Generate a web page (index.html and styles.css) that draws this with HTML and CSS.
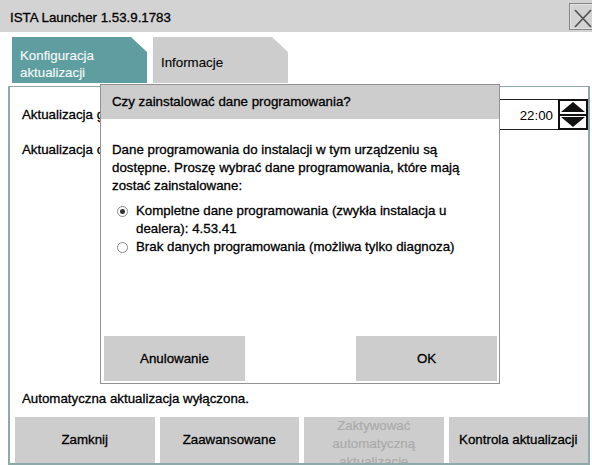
FILE: index.html
```html
<!DOCTYPE html>
<html>
<head>
  <meta charset='utf-8'>
  <title>ISTA Launcher</title>
  <meta name='viewport' content='width=device-width, initial-scale=1'>
  <link rel="stylesheet" href="styles.css">
</head>
<body>

  <div class="window">
    <div class="titlebar">
      <span class="title">ISTA Launcher 1.53.9.1783</span>
      <button class="close" type="button">
        <svg width="20" height="22" viewBox="0 0 20 22">
          <path d="M3 4 L19 21 M19 4 L3 21" stroke="#555" stroke-width="1.8" fill="none"/>
        </svg>
      </button>
    </div>

    <div class="tabs">
      <div class="tab active">Konfiguracja<br>aktualizacji</div>
      <div class="tab">Informacje</div>
    </div>

    <div class="panel">
      <div class="row">
        <span class="label">Aktualizacja godzina</span>
        <div class="spinner">
          <div class="spin-field">22:00</div>
          <div class="spin-buttons">
            <span class="spin-up">
              <svg width="24" height="10" viewBox="0 0 24 10"><path d="M12 0 L24 10 L0 10 Z" fill="#111"/></svg>
            </span>
            <span class="spin-down">
              <svg width="24" height="10" viewBox="0 0 24 10"><path d="M0 0 L24 0 L12 10 Z" fill="#111"/></svg>
            </span>
          </div>
        </div>
      </div>
      <div class="row-second">
        <span class="label">Aktualizacja codziennie</span>
      </div>

      <div class="status">Automatyczna aktualizacja wyłączona.</div>
      <div class="actions">
        <button class="btn" type="button">Zamknij</button>
        <button class="btn" type="button">Zaawansowane</button>
        <button class="btn" type="button" disabled>Zaktywować<br>automatyczną<br>aktualizację</button>
        <button class="btn" type="button">Kontrola aktualizacji</button>
      </div>
    </div>

    <!-- okno dialogowe nad panelem -->
    <div class="dialog">
      <div class="dialog-head">Czy zainstalować dane programowania?</div>
      <div class="dialog-body">
        <p class="dialog-text">Dane programowania do instalacji w tym urządzeniu są dostępne. Proszę wybrać dane programowania, które mają zostać zainstalowane:</p>
        <div class="option">
          <span class="radio checked"></span>
          <span>Kompletne dane programowania (zwykła instalacja u dealera): 4.53.41</span>
        </div>
        <div class="option">
          <span class="radio"></span>
          <span>Brak danych programowania (możliwa tylko diagnoza)</span>
        </div>
      </div>
      <div class="dialog-actions">
        <button class="btn" type="button">Anulowanie</button>
        <button class="btn" type="button">OK</button>
      </div>
    </div>
  </div>

</body>
</html>
```

FILE: styles.css
```css
body {
  margin: 0;
  background: #fff;
  font-family: "Liberation Sans", Arial, sans-serif;
  font-size: 13.3px;
  color: #000;
  -webkit-text-stroke: 0.3px #000; /* tekst jak w oryginale, ciemniejszy */
}
.window {
  position: relative;
  width: 592px;
  height: 465px;
  overflow: hidden;
}

/* ======== pasek tytułu ======== */
.titlebar {
  display: flex;
  align-items: flex-start;
  height: 32px;
  padding-left: 10px;
  background: #d3d3d3;
  overflow: hidden;
}
.title {
  margin-top: 9px;
  line-height: 17px;
}
.close {
  margin-left: auto;
  margin-top: 3px;
  margin-right: -4px;
  width: 27px;
  height: 27px;
  padding: 0 0 0 2px;
  background: #d3d3d3;
  border: 1px solid #858585;
  box-shadow: inset 0 0 0 1px #e2e2e2;
  display: flex;
  align-items: center;
}

/* ======== zakładki ======== */
.tabs {
  display: flex;
  gap: 6px;
  height: 54px;
  padding: 5px 0 0 12px;
  box-sizing: border-box;
}
.tab {
  width: 135px;
  height: 46px;
  padding: 17px 8px 0;
  box-sizing: border-box;
  line-height: 17px;
  background: #cdcdcd;
  clip-path: polygon(0 0, calc(100% - 16px) 0, 100% 15px, 100% 100%, 0 100%);
  -webkit-text-stroke: 0.15px #222;
}
.tab.active {
  padding-top: 10px;
  background: #5f9ea0;
  color: #f4f8f8;
  -webkit-text-stroke: 0.15px #f4f8f8;
}

/* ======== panel ======== */
.panel {
  display: flex;
  flex-direction: column;
  margin-left: 8px;
  width: 582px;
  height: 379px;
  box-sizing: border-box;
  border: 2px solid #8fa8a8;
  border-top-width: 1px;
}
.row {
  display: flex;
  align-items: center;
  justify-content: space-between;
  height: 31px;
  margin-top: 12px;
  padding-left: 12px;
}
.row-second {
  margin-top: 11px;
  padding-left: 12px;
  line-height: 17px;
}
.spinner {
  display: flex;
  height: 31px;
}
.spin-field {
  width: 78px;
  padding-right: 5px;
  box-sizing: border-box;
  border: 1px solid #222;
  border-right: none;
  text-align: right;
  line-height: 31px;
  background: #fff;
  -webkit-text-stroke: 0;
}
.spin-buttons {
  display: flex;
  flex-direction: column;
  width: 30px;
  box-sizing: border-box;
  border: 2px solid #111;
}
.spin-buttons span {
  flex: 1;
  display: flex;
  align-items: center;
  justify-content: center;
}
.spin-up {
  border-bottom: 2px solid #111;
}
.status {
  margin-top: auto;
  margin-bottom: 10px;
  padding-left: 12px;
  line-height: 17px;
}
.actions {
  display: flex;
  gap: 5px;
  padding-left: 5px;
}
.btn {
  height: 46px;
  padding: 0 4px;
  border: none;
  background: #cdcdcd;
  font-family: inherit;
  font-size: 13.3px;
  color: #000;
  line-height: 18px;
  overflow: hidden;
}
.actions .btn {
  flex: 1;
}
.btn:disabled {
  color: #ababab;
  -webkit-text-stroke: 0.2px #ababab;
}

/* ======== dialog ======== */
.dialog {
  position: absolute;
  left: 100px;
  top: 84px;
  width: 400px;
  height: 300px;
  box-sizing: border-box;
  display: flex;
  flex-direction: column;
  background: #fff;
  border: 1px solid #929292;
}
.dialog-head {
  height: 34px;
  padding-left: 11px;
  line-height: 34px;
  background: #cdcdcd;
}
.dialog-body {
  padding: 0 12px 0 11px;
  line-height: 18px;
}
.dialog-text {
  margin: 22px 0 7px;
}
.option {
  display: flex;
  align-items: flex-start;
  gap: 8px;
  padding-left: 5px;
}
.radio {
  flex: none;
  position: relative;
  width: 11px;
  height: 11px;
  margin-top: 4px;
  box-sizing: border-box;
  border: 1px solid #8a8a8a;
  border-radius: 50%;
  background: #fff;
}
.radio.checked::after {
  content: "";
  position: absolute;
  left: 2px;
  top: 2px;
  width: 5px;
  height: 5px;
  border-radius: 50%;
  background: #333;
}
.dialog-actions {
  display: flex;
  justify-content: space-between;
  margin-top: auto;
  padding: 0 2px 2px 3px;
}
.dialog-actions .btn {
  width: 141px;
  height: 45px;
}
```
